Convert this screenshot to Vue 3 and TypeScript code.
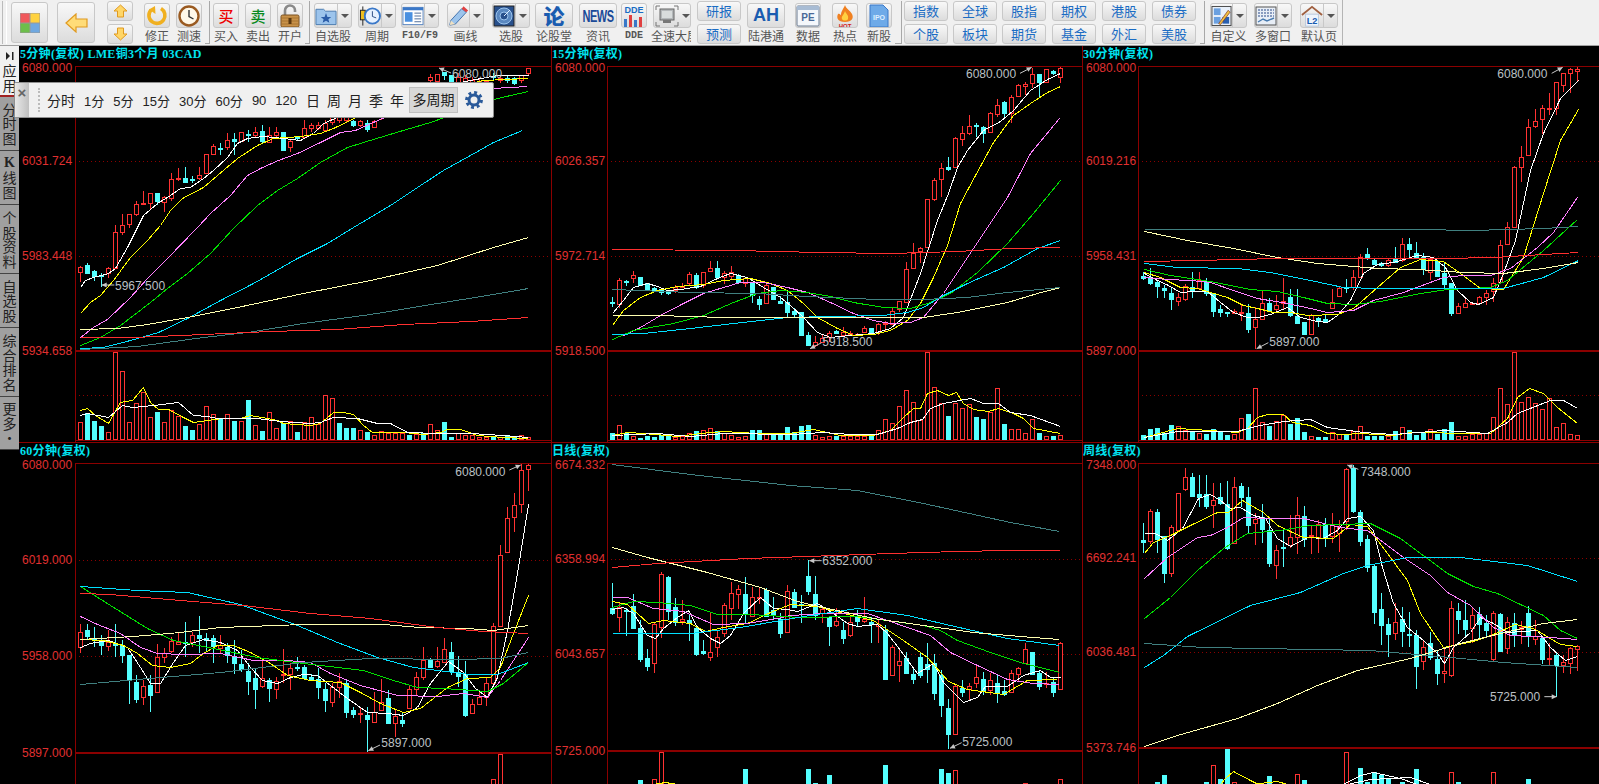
<script setup lang="ts">
type Tool = { kind: string; gap: number; w: number; label?: string; icon?: string; split?: boolean; top?: string; bottom?: string }

const tools: Tool[] = [
  { kind: 'grip', gap: 0, w: 3 },
  { kind: 'big', gap: 4, w: 37, icon: 'grid' },
  { kind: 'big', gap: 9, w: 38, icon: 'left' },
  { kind: 'pair', gap: 12, w: 26, top: '▲', bottom: '▼' },
  { kind: 'icon', gap: 11, w: 26, label: '修正', icon: 'fix' },
  { kind: 'icon', gap: 6, w: 26, label: '测速', icon: 'clock' },
  { kind: 'sep', gap: 3, w: 5 },
  { kind: 'icon', gap: 3, w: 26, label: '买入', icon: 'buy' },
  { kind: 'icon', gap: 6, w: 26, label: '卖出', icon: 'sell' },
  { kind: 'icon', gap: 6, w: 26, label: '开户', icon: 'lock' },
  { kind: 'sep', gap: 2, w: 5 },
  { kind: 'icon', gap: 4, w: 38, label: '自选股', icon: 'folder', split: true },
  { kind: 'icon', gap: 6, w: 38, label: '周期', icon: 'period', split: true },
  { kind: 'icon', gap: 5, w: 38, label: 'F10/F9', icon: 'f10', split: true },
  { kind: 'icon', gap: 8, w: 37, label: '画线', icon: 'pen', split: true },
  { kind: 'icon', gap: 8, w: 38, label: '选股', icon: 'radar', split: true },
  { kind: 'icon', gap: 5, w: 38, label: '论股堂', icon: 'lun' },
  { kind: 'icon', gap: 6, w: 38, label: '资讯', icon: 'news' },
  { kind: 'icon', gap: 4, w: 26, label: 'DDE', icon: 'dde' },
  { kind: 'icon', gap: 6, w: 38, label: '全速大屏', icon: 'screen' },
  { kind: 'pair', gap: 6, w: 44, top: '研报', bottom: '预测' },
  { kind: 'icon', gap: 6, w: 38, label: '陆港通', icon: 'ah' },
  { kind: 'icon', gap: 10, w: 26, label: '数据', icon: 'pe' },
  { kind: 'icon', gap: 11, w: 26, label: '热点', icon: 'hot' },
  { kind: 'icon', gap: 8, w: 26, label: '新股', icon: 'ipo' },
  { kind: 'sep', gap: 3, w: 7 },
  { kind: 'pair', gap: 2, w: 44, top: '指数', bottom: '个股' },
  { kind: 'pair', gap: 5, w: 44, top: '全球', bottom: '板块' },
  { kind: 'pair', gap: 5, w: 44, top: '股指', bottom: '期货' },
  { kind: 'pair', gap: 6, w: 44, top: '期权', bottom: '基金' },
  { kind: 'pair', gap: 6, w: 44, top: '港股', bottom: '外汇' },
  { kind: 'pair', gap: 6, w: 44, top: '债券', bottom: '美股' },
  { kind: 'sep', gap: 4, w: 5 },
  { kind: 'icon', gap: 5, w: 37, label: '自定义', icon: 'custom', split: true },
  { kind: 'icon', gap: 7, w: 38, label: '多窗口', icon: 'multi', split: true },
  { kind: 'icon', gap: 8, w: 38, label: '默认页', icon: 'home', split: true },
]

const sideItems = [
  { text: '应用', h: 51, on: true },
  { text: '分时图', h: 54 },
  { text: 'K线图', h: 54 },
  { text: '个股资料', h: 69 },
  { text: '自选股', h: 54 },
  { text: '综合排名', h: 69 },
  { text: '更多·', h: 53 },
]

const periods = ['分时', '1分', '5分', '15分', '30分', '60分', '90', '120']
const bigPeriods = ['日', '周', '月', '季', '年']

const MA = ['#ffffff', '#ffff00', '#ff80ff', '#00e000', '#00e0ff', '#ffffb0', '#408080', '#ff3030']

type Note = { text: string; tx: number; ty: number; l: number[] }

type Def = {
  title: string
  left: number
  w: number
  row: number
  ox: number
  oy: number
  first: number
  plot: number
  top: number
  mid: number
  dots: number[]
  labels: string[]
  labelX: number
  candles: string
  lines: string[]
  vol?: number[]
  volAt?: number[][]
  vma: string[]
  notes: Note[]
}

const defs: Def[] = [
  {
    title: '5分钟(复权) LME铜3个月 03CAD', left: 19, w: 532, row: 0, ox: 70, oy: 130, first: 31, plot: 75, top: 66, mid: 350,
    dots: [161, 256, 395], labels: ['6080.000', '6031.724', '5983.448', '5934.658'], labelX: 22,
    candles: `r408,410,425,457 c400,405,428,430 c420,424,438,453 c428,436,438,470 r412,415,430,443 r285,305,413,415 r253,286,305,315 r253,253,281,295 r213,222,252,258 r183,218,222,224 r190,190,218,240 c188,190,213,225 r198,200,216,246 r128,148,203,213 r113,143,146,153 c110,144,155,160 c138,148,150,160 r112,136,143,150 r72,72,128,130 r42,48,72,75 c40,55,57,75 r10,30,50,60 c8,28,32,75 r5,5,32,35 c0,12,14,35 r-10,5,14,20 c-15,3,32,42 r-10,15,35,38 r-10,5,16,22 c5,7,60,60 r30,33,52,65 c17,22,24,30 r-30,-5,20,25 r-20,-15,-5,5 r-25,-15,-5,0 r-30,-20,0,5 r-50,-40,-25,-15 r-60,-50,-30,-20 r-60,-45,-30,-25 c-30,-27,-15,-10 r-30,-27,-15,-10 c-30,-21,-3,5 r-30,-27,-9,-5 r-70,-60,-40,-30 r-90,-80,-60,-50 c-100,-90,-70,-60 r-110,-100,-80,-70 r-120,-110,-95,-85 c-120,-115,-100,-90 r-130,-120,-105,-95 r-168,-160,-150,-135 r-168,-168,-147,-140 c-175,-174,-165,-150 c-165,-165,-144,-135 r-170,-160,-145,-135 r-165,-155,-140,-130 r-160,-150,-140,-130 r-155,-147,-138,-128 r-150,-147,-138,-128 c-172,-162,-158,-150 r-165,-155,-150,-140 c-165,-155,-150,-140 c-160,-156,-141,-135 r-165,-165,-150,-140 r-186,-186,-171,-165`,
    lines: [
      '31,472 45,450 70,440 115,430 136,415 170,350 200,290 220,255 262,220 300,195 330,175 360,170 400,145 430,120 470,80 500,40 530,25 580,18 640,25 690,30 730,10 760,-20 850,-60 1000,-110 1200,-150 1280,-165 1374,-165',
      '31,550 60,515 90,495 130,450 180,380 230,330 270,285 300,240 335,205 400,170 440,135 500,85 560,45 610,25 690,18 750,10 790,-5 900,-60 1100,-120 1240,-150 1374,-156',
      '31,622 70,590 110,568 180,500 230,445 290,385 380,290 420,250 480,195 530,135 570,115 625,90 680,70 750,35 810,5 855,0 1071,-96 1266,-126 1371,-132',
      '31,645 90,620 150,585 240,515 290,475 350,430 420,370 490,295 560,225 620,180 680,145 750,95 830,50 880,35 978,6 1080,-24 1281,-96 1374,-117',
      '31,655 100,650 180,630 265,605 350,565 450,510 550,460 680,385 770,340 850,290 960,225 1050,165 1120,120 1200,75 1270,35 1355,0',
      '31,597 140,593 230,582 350,562 500,530 700,490 900,450 1100,405 1270,350 1374,320',
      '31,658 200,648 400,622 530,605 700,578 900,552 1100,518 1250,495 1374,475',
      '31,622 190,620 400,612 600,603 800,597 1000,582 1200,572 1374,560',
    ],
    vol: [875, -850, -873, -888, 905, 667, 722, 875, 820, 787, 862, -847, 875, 840, 857, -888, -900, 883, 829, 853, -868, 853, -873, 873, -810, 886, -903, 847, 895, -880, 873, -906, 875, 862, 882, 796, 805, -880, -895, -895, 900, -905, 915, 902, 908, 908, 908, -915, 912, -910, 883, 900, -877, -920, 908, 915, 915, 922, 922, -920, 922, -915, -922, 915, 922],
    vma: [
      '31,840 50,835 75,855 115,878 150,815 185,810 220,772 240,815 265,838 295,838 340,860 370,875 410,870 460,865 510,865 540,855 590,865 620,870 640,880 720,885 750,880 790,845 820,845 850,853 880,885 905,905 1000,905 1060,912 1110,905 1130,898 1170,898 1220,915 1300,920 1374,925',
      '31,855 50,850 115,860 155,825 185,830 250,825 325,815 370,855 410,857 440,865 560,865 630,872 720,878 750,875 790,862 860,865 920,878 960,880 1010,905 1100,908 1200,908 1300,915 1374,922',
    ],
    notes: [
      { text: '5967.500', tx: 135, ty: 467, l: [95, 465, 133, 465] },
      { text: '6080.000', tx: 1146, ty: -168, l: [1107, -186, 1143, -171] },
    ],
  },
  {
    title: '15分钟(复权)', left: 552, w: 530, row: 0, ox: 590, oy: 60, first: 67, plot: 607, top: 66, mid: 350,
    dots: [161, 256, 395], labels: ['6080.000', '6026.357', '5972.714', '5918.500'], labelX: 555,
    candles: `c712,725,727,740 r655,660,732,745 c660,663,665,678 r633,645,655,668 c650,652,676,678 c668,670,686,688 c682,685,690,696 c685,688,695,705 c690,695,698,705 r675,682,690,700 r668,678,680,685 r635,642,668,675 c640,645,680,688 r636,636,675,685 r603,625,632,636 c603,625,650,652 r633,640,650,672 r618,635,648,660 c643,645,665,668 r652,655,668,680 c665,668,705,728 c708,716,733,750 r668,676,730,732 c680,682,716,718 c708,722,728,730 c695,725,755,775 c745,752,762,770 c755,757,825,825 c815,825,855,858 r828,845,855,860 r825,835,845,848 r812,818,832,845 c810,814,820,822 r800,817,825,830 r812,818,822,825 r818,822,825,828 r798,803,815,820 c803,805,822,825 r790,793,815,825 r782,790,793,815 r745,752,792,795 r722,724,748,755 r607,628,725,728 r550,578,625,628 r562,564,572,610 r418,418,560,562 r355,360,418,422 r308,325,358,412 c292,322,328,333 r230,235,320,322 r198,220,238,258 r165,198,218,225 c190,195,198,232 c198,200,218,248 r155,160,215,218 r118,135,163,170 c123,127,160,170 r105,112,158,188 r72,74,107,110 r65,72,78,105 r25,42,68,85 c42,42,65,115 r28,28,65,68 c30,34,38,45 r22,25,50,70`,
    lines: [
      '67,760 100,720 130,680 170,668 200,678 230,690 270,688 330,678 380,655 420,640 470,650 520,680 570,712 600,735 640,770 680,815 720,832 780,825 850,818 900,805 940,770 990,640 1040,480 1075,400 1100,320 1130,270 1180,210 1230,182 1270,150 1320,90 1370,58 1411,40',
      '67,795 100,750 150,710 200,690 260,678 340,672 400,660 480,655 540,668 590,690 640,730 680,770 740,805 790,825 850,822 900,810 950,780 990,730 1030,650 1070,555 1110,430 1155,345 1210,245 1270,165 1320,130 1370,95 1411,78',
      '100,825 150,800 210,765 280,730 340,700 400,680 450,665 520,665 590,682 650,695 720,725 790,760 850,780 900,788 960,785 1000,770 1060,700 1120,610 1180,520 1250,410 1320,280 1408,175',
      '67,838 130,810 250,790 340,765 430,725 500,700 570,690 650,695 720,708 790,725 880,742 960,745 1010,730 1080,700 1160,635 1250,550 1330,460 1410,360',
      '67,823 160,820 300,803 430,790 590,772 720,768 880,765 950,755 1000,740 1060,705 1130,670 1240,620 1340,565 1410,540',
      '67,766 200,766 400,770 560,770 700,770 880,772 1000,772 1100,755 1250,725 1340,700 1410,680',
      '67,688 300,697 500,700 650,708 860,718 1000,718 1130,710 1250,695 1410,682',
      '67,568 430,570 690,575 900,578 1100,574 1260,565 1410,560',
    ],
    vol: [-1120, 1095, -1118, 1127, -1135, -1128, -1130, -1125, -1128, 1130, 1128, 1120, -1113, 1110, 1105, -1112, 1120, 1125, 1130, 1128, -1110, -1110, 1120, -1125, -1120, -1102, -1115, -1098, -1095, 1125, 1132, 1128, -1128, 1128, 1128, 1128, 1128, -1125, 1110, 1078, 1090, 1038, 990, 1026, 1080, 877, 982, 1028, -1068, 1030, 1045, 1032, -1072, -1078, 1055, 985, -1092, 1108, 1108, 1120, 1078, -1120, 1128, -1128, 1126],
    vma: [
      '67,1125 110,1115 160,1120 260,1128 330,1118 400,1112 500,1120 600,1118 670,1108 750,1125 850,1125 900,1110 940,1070 970,1045 990,1045 1010,1000 1040,990 1075,1005 1097,997 1120,1030 1150,1048 1195,1052 1225,1045 1270,1060 1300,1075 1330,1105 1411,1118',
      '67,1125 200,1118 300,1128 400,1118 600,1122 700,1115 780,1122 860,1122 920,1105 960,1085 995,1078 1020,1045 1060,1028 1140,1015 1180,1028 1225,1030 1260,1055 1320,1065 1411,1098',
    ],
    notes: [
      { text: '6080.000', tx: 1128, ty: 43, l: [1325, 22, 1290, 40] },
      { text: '5918.500', tx: 697, ty: 845, l: [660, 866, 695, 848] },
    ],
  },
  {
    title: '30分钟(复权)', left: 1083, w: 516, row: 0, ox: 1110, oy: 60, first: 101, plot: 1138, top: 66, mid: 350,
    dots: [161, 256, 395], labels: ['6080.000', '6019.216', '5958.431', '5897.000'], labelX: 1086,
    candles: `c635,648,655,660 c625,655,668,675 c662,665,677,713 c675,685,689,713 c682,700,716,750 r700,712,722,738 r672,678,716,722 c635,680,692,713 r635,660,684,688 c655,665,698,708 c698,700,752,770 c735,748,755,770 c755,757,760,772 r748,753,759,762 r735,755,757,782 c732,760,806,820 r740,778,800,868 r693,730,778,780 c715,730,750,755 r705,735,747,755 r655,722,730,750 c688,712,765,770 c687,768,788,790 c785,787,823,823 r762,765,823,825 c770,775,780,800 c762,777,783,785 r688,725,743,745 r678,685,707,710 c658,680,682,700 r630,650,680,690 r582,590,650,655 c563,583,595,600 c598,600,612,615 c605,608,616,622 r595,600,615,622 c562,595,605,608 r533,553,600,605 c535,552,567,590 c545,578,590,592 c580,590,628,645 r590,598,635,660 c600,602,648,650 c605,640,672,685 c670,670,760,768 r730,738,758,762 r718,730,742,745 r728,730,732,735 r708,710,730,735 r690,700,710,735 r655,668,692,725 r540,556,665,668 r487,500,552,555 r318,322,500,503 r258,290,320,365 r178,200,284,287 r147,182,197,205 r135,145,176,222 r100,144,146,165 r65,67,143,165 r40,40,74,95 r25,26,38,100 r22,26,32,62`,
    lines: [
      '101,640 140,660 175,675 210,695 250,693 290,692 330,725 370,755 410,770 440,772 480,762 530,740 570,770 620,783 650,785 680,765 720,720 760,640 800,612 850,605 920,585 970,590 1005,620 1040,690 1080,725 1105,732 1150,710 1180,640 1215,540 1260,330 1300,220 1350,115 1403,60',
      '101,635 150,650 210,680 260,685 300,695 350,712 400,735 440,745 490,755 540,755 590,765 680,762 730,745 800,680 870,620 930,597 1000,603 1050,640 1110,685 1180,688 1240,590 1300,400 1350,240 1403,148',
      '101,650 170,658 240,660 300,665 370,690 440,715 530,730 600,745 650,755 730,750 790,720 880,695 1000,650 1060,645 1140,645 1200,625 1280,560 1330,515 1400,412',
      '101,628 180,645 300,662 420,688 500,692 580,710 650,728 730,733 810,722 930,700 1010,687 1140,680 1190,660 1300,570 1400,478',
      '101,610 200,620 380,625 480,635 600,660 700,680 800,685 1000,683 1180,685 1300,650 1403,600',
      '101,513 230,540 370,565 500,590 620,610 800,623 920,628 1060,635 1180,640 1300,625 1403,607',
      '101,506 930,506 1080,511 1300,505 1403,497',
      '101,604 260,600 500,595 800,594 1000,595 1150,590 1300,583 1403,577',
    ],
    vol: [-1125, -1108, -1105, -1118, -1095, 1097, 1110, -1115, 1120, -1122, -1108, -1115, -1125, 1122, 1075, -1062, 985, 1087, -1098, 1082, 1065, -1092, -1075, -1115, 1128, -1132, -1130, 1115, 1122, -1125, 1112, 1097, -1128, -1128, -1128, 1128, -1113, 1102, -1110, -1125, -1115, 1108, -1122, -1108, -1087, 1127, 1127, 1123, 1122, 1120, 1070, 985, 1033, 877, 1027, 1012, 1030, 1048, 1015, 1100, 1090, 1123, 1126],
    vma: [
      '101,1130 200,1105 300,1110 380,1115 410,1105 440,1070 470,1063 520,1063 545,1085 600,1095 650,1120 700,1122 750,1118 850,1125 900,1115 1100,1118 1140,1118 1190,1075 1220,1010 1256,985 1300,998 1340,1040 1400,1088',
      '101,1130 200,1112 380,1112 410,1105 450,1095 520,1082 600,1078 650,1100 760,1115 850,1122 1000,1110 1130,1118 1190,1085 1220,1060 1320,1020 1360,1020 1400,1045',
    ],
    notes: [
      { text: '6080.000', tx: 1162, ty: 43, l: [1358, 22, 1325, 40] },
      { text: '5897.000', tx: 478, ty: 845, l: [440, 866, 475, 848] },
    ],
  },
  {
    title: '60分钟(复权)', left: 19, w: 532, row: 1, ox: 70, oy: 450, first: 31, plot: 75, top: 463, mid: 752,
    dots: [560, 656], labels: ['6080.000', '6019.000', '5958.000', '5897.000'], labelX: 22,
    candles: `r522,547,590,608 c522,540,558,570 c530,563,570,590 c555,575,585,615 r540,575,587,603 c522,578,586,620 c570,585,615,640 c615,615,690,762 c675,696,746,760 r690,708,740,765 c675,705,735,785 r582,622,727,730 r595,610,620,640 r560,573,602,608 r548,576,583,585 c517,575,578,620 r545,555,577,590 c498,555,565,610 c548,565,570,605 c555,565,587,640 r555,585,593,610 c580,590,615,640 c570,622,640,672 c600,642,657,665 c640,662,692,735 c655,684,716,776 r630,683,708,714 c685,690,713,755 r682,692,718,746 r597,672,674,700 r640,655,672,720 c620,650,652,662 c645,652,685,690 c672,680,688,693 c655,688,710,746 c700,717,750,785 r700,710,755,772 r670,692,710,745 c690,698,785,805 c770,780,792,803 r775,790,792,818 c770,795,808,905 r725,785,815,815 r687,755,780,782 c720,745,820,822 r780,798,818,860 c790,810,818,832 r705,718,775,778 r665,680,718,735 r590,630,680,690 c625,628,652,655 r590,633,648,655 r565,598,635,640 c575,606,662,675 c618,665,677,710 c632,672,795,800 r748,763,790,792 r725,742,763,765 r685,700,742,768 r518,528,698,700 r285,316,527,530 r170,205,307,310 r130,165,200,245 r42,60,163,190 r42,46,58,123`,
    lines: [
      '31,590 60,578 115,570 170,590 210,650 240,698 270,698 310,635 345,585 400,568 450,575 500,600 540,650 575,690 620,700 660,680 700,672 740,675 780,705 830,745 890,785 950,790 1000,795 1040,770 1080,700 1135,632 1180,665 1215,715 1250,740 1280,680 1310,540 1340,370 1375,162',
      '31,567 100,570 160,585 200,610 245,645 300,650 360,640 400,610 440,585 490,585 540,605 600,640 650,675 720,690 810,695 870,725 930,760 1000,785 1050,775 1130,710 1190,685 1260,680 1290,650 1330,550 1375,435',
      '31,497 80,522 150,550 210,590 260,610 340,612 450,610 550,630 650,630 720,635 780,670 870,705 980,735 1100,738 1180,730 1250,740 1290,690 1330,630 1373,562',
      '31,407 120,465 230,535 310,570 430,595 560,620 700,640 880,660 970,690 1040,712 1120,715 1250,722 1300,700 1373,635',
      '31,408 200,420 350,425 510,463 680,525 800,575 920,620 1030,652 1200,672 1280,672 1373,635',
      '31,568 190,558 330,545 450,530 700,523 940,523 1050,532 1190,535 1270,540 1373,525',
      '31,703 200,688 450,665 700,635 900,625 1150,628 1290,625 1373,607',
      '31,430 120,432 330,450 520,465 720,490 900,505 1100,530 1240,542 1373,550',
    ],
    volAt: [[1270, 988], [1291, 912]],
    vma: [],
    notes: [
      { text: '6080.000', tx: 1156, ty: 65, l: [1352, 45, 1318, 60] },
      { text: '5897.000', tx: 934, ty: 880, l: [895, 902, 930, 885] },
    ],
  },
  {
    title: '日线(复权)', left: 552, w: 530, row: 1, ox: 590, oy: 450, first: 67, plot: 607, top: 463, mid: 750,
    dots: [559, 654], labels: ['6674.332', '6358.994', '6043.657', '5725.000'], labelX: 555,
    candles: `c400,475,490,495 r460,472,500,545 c475,480,482,558 c433,468,533,535 c510,533,627,635 c598,625,648,662 r520,523,640,670 r365,372,530,565 c378,382,482,510 c445,472,515,527 r450,507,512,525 c495,510,520,572 c530,535,612,618 c570,603,609,615 r490,607,620,632 r540,560,590,622 r458,466,548,560 r397,430,475,510 r405,418,433,478 c382,432,490,520 r410,440,498,502 r412,440,442,462 c415,420,497,500 c442,480,492,508 c490,507,548,563 r405,422,545,547 c418,427,470,472 c435,462,466,520 c330,378,423,435 c378,433,495,510 r472,478,488,518 c498,500,527,588 r475,514,524,530 c515,540,563,582 r500,517,555,560 c480,500,512,530 r440,508,513,520 c500,517,523,578 r510,523,527,578 c525,540,687,690 r585,592,674,677 r600,634,644,695 c605,625,670,672 c655,672,687,702 c605,622,675,685 c578,642,657,700 c612,640,728,750 c660,676,764,800 c748,775,852,897 r705,707,853,855 c690,713,726,740 r700,707,718,750 r645,682,700,715 c665,688,723,735 r668,690,720,735 c675,698,730,758 c690,724,733,738 r660,670,727,730 r650,655,673,695 r580,598,638,642 c605,607,672,675 c660,670,707,720 r665,700,702,715 c680,697,725,740 r575,578,717,720`,
    lines: [
      '67,478 100,470 130,490 170,555 195,565 220,535 260,500 295,480 320,530 360,565 390,580 420,555 460,490 510,440 550,475 590,478 620,484 680,458 730,490 770,520 800,527 860,522 890,550 930,600 980,670 1030,640 1060,695 1120,757 1160,740 1185,708 1250,708 1300,675 1350,660 1380,680 1411,680',
      '67,452 110,462 175,518 220,510 300,520 345,543 400,530 470,520 540,485 600,462 680,468 760,490 850,510 940,570 1010,620 1075,693 1130,718 1240,733 1310,690 1400,688',
      '67,442 110,442 190,475 280,482 370,523 470,520 560,505 600,495 700,490 830,490 950,530 1020,555 1080,605 1160,645 1250,688 1330,700 1408,703',
      '67,470 130,452 200,455 300,465 380,493 480,493 630,502 800,497 1000,525 1050,540 1100,570 1200,605 1290,635 1408,667',
      '67,550 300,550 450,530 640,498 800,475 950,495 1080,525 1250,565 1408,586',
      '67,292 170,322 350,365 510,410 620,452 700,470 850,505 1000,525 1150,545 1290,558 1408,568',
      '67,42 300,72 600,105 800,120 1000,160 1260,215 1408,242',
      '67,350 200,338 470,325 650,318 900,310 1100,304 1250,301 1408,301',
    ],
    volAt: [[151, -990], [193, 988], [214, 907], [466, -957], [655, -957], [676, -998], [718, -975], [886, -945], [1054, -957], [1075, -968], [1096, 961], [1306, 998], [1411, 988]],
    vma: ['190,1002 225,995 260,1002'],
    notes: [
      { text: '6352.000', tx: 697, ty: 332, l: [658, 332, 695, 332] },
      { text: '5725.000', tx: 1117, ty: 875, l: [1080, 895, 1115, 878] },
    ],
  },
  {
    title: '周线(复权)', left: 1083, w: 516, row: 1, ox: 1110, oy: 450, first: 101, plot: 1138, top: 463, mid: 747,
    dots: [558, 652], labels: ['7348.000', '6692.241', '6036.481', '5373.746'], labelX: 1086,
    candles: `c220,270,276,310 r178,182,272,282 c178,186,268,308 c258,258,368,398 r225,232,370,380 r130,130,240,242 r55,82,118,122 c68,82,138,142 c75,132,142,172 c75,133,167,177 r100,150,166,235 c100,140,160,165 c93,162,295,300 r82,112,280,282 c100,108,140,170 c112,140,225,250 r190,208,218,285 c162,200,237,280 c200,240,338,350 r285,300,344,388 c240,290,293,352 r195,262,285,295 r142,196,260,312 c168,198,268,290 r225,255,258,312 r210,222,260,308 c205,222,265,290 r190,225,258,280 r210,230,250,305 r55,58,212,240 c45,55,183,188 c180,186,272,287 c255,268,350,365 c345,348,485,522 c430,478,525,585 c505,522,552,622 r460,515,550,570 c472,508,542,590 c487,552,554,590 c540,555,648,716 r570,590,632,660 c545,578,622,630 c600,628,668,705 r590,662,668,700 r453,475,676,680 c458,484,507,552 c450,510,538,560 r475,495,534,578 c472,492,522,568 c495,520,540,562 r483,490,628,632 c490,492,602,604 r500,515,595,612 c490,520,552,590 r512,532,536,582 c468,490,558,590 r510,558,566,585 c558,563,628,642 r580,625,628,645 c605,616,645,740 r615,637,645,668 r590,595,640,672 r585,588,596,662`,
    lines: [
      '101,248 135,248 170,270 215,235 240,190 265,145 300,133 330,150 360,175 390,170 430,195 465,205 500,265 540,288 590,262 640,265 680,240 710,205 750,198 790,240 815,350 850,460 890,530 940,570 980,610 1003,640 1030,590 1080,545 1110,500 1150,520 1190,545 1280,540 1320,590 1365,630 1400,618',
      '101,310 130,275 180,255 240,225 320,185 355,185 395,150 460,185 500,225 580,260 670,265 720,222 770,228 830,310 890,390 930,490 1000,590 1090,572 1150,552 1215,522 1270,535 1350,582 1400,588',
      '101,385 170,320 260,260 300,255 350,230 400,202 480,205 580,205 690,230 770,240 880,320 960,375 1010,425 1080,465 1150,530 1200,555 1320,560 1400,567',
      '101,505 180,440 260,360 340,295 410,250 510,240 600,225 780,218 870,265 1010,368 1090,408 1160,430 1300,495 1350,540 1400,565',
      '101,652 160,615 230,558 420,465 570,425 700,370 770,345 890,322 1050,320 1250,345 1400,392',
      '101,888 200,855 380,805 500,760 620,705 740,660 900,625 1050,580 1170,550 1300,520 1400,508',
      '101,580 280,592 780,600 1020,622 1180,637 1400,650',
    ],
    volAt: [[143, -996], [164, -975], [290, -996], [311, 945], [332, -987], [353, -897], [374, 995], [479, -978], [563, 972], [584, -990], [710, 907], [752, -955], [773, -995], [794, -967], [815, -975], [836, -985], [878, -996], [920, -957], [1025, 965], [1046, -995], [1151, 965], [1256, -988]],
    vma: ['330,1002 345,985 370,963 420,990 445,1002', '700,1002 750,975 790,967 870,985 920,1002 990,1002', '340,1002 420,1002 500,992 530,1002', '710,1002 780,987 900,982 960,1002'],
    notes: [
      { text: '7348.000', tx: 752, ty: 65, l: [712, 45, 745, 58] },
      { text: '5725.000', tx: 1140, ty: 740, l: [1340, 740, 1303, 740] },
    ],
  },
]

const px = (v: number) => Math.round(v) + 0.5

const buildChart = (d: Def) => {
  const fx = (z: number) => d.ox + z / 3
  const fy = (z: number) => d.oy + z / 3
  const mapLine = (s: string) =>
    s.split(' ').map(p => {
      const [x, y] = p.split(',').map(Number)
      return `${px(fx(x))},${px(fy(y))}`
    }).join(' ')

  let redWick = '', cyanWick = '', redBody = '', cyanBody = ''
  d.candles.trim().split(/\s+/).forEach((t, i) => {
    const [hi, top, bot, lo] = t.slice(1).split(',').map(Number)
    const x = px(fx(d.first + 21 * i) - 0.5)
    const wick = `M${x} ${Math.round(fy(hi))}V${Math.round(fy(lo))}`
    const yt = px(fy(top))
    const yb = Math.max(px(fy(bot)), yt + 1)
    const body = `M${x - 2} ${yt}H${x + 2}V${yb}H${x - 2}Z`
    if (t[0] === 'r') { redWick += wick; redBody += body } else { cyanWick += wick; cyanBody += body }
  })

  const volBottom = d.row === 0 ? 439 : 790
  let volRed = '', volCyan = ''
  const volList = d.vol ? d.vol.map((v, i) => [d.first + 21 * i, v]) : d.volAt || []
  volList.forEach(([zx, v]) => {
    const x = px(fx(zx) - 0.5)
    const y = px(fy(Math.abs(v)))
    const body = `M${x - 2} ${y}H${x + 2}V${volBottom}H${x - 2}Z`
    if (v > 0) volRed += body
    else volCyan += body
  })

  const vb = d.row === 0 ? { y: 60, h: 382 } : { y: 457, h: 327 }
  return {
    ...d,
    viewBox: `${d.left} ${vb.y} ${d.w} ${vb.h}`,
    width: d.w,
    height: vb.h,
    right: d.left + d.w,
    bottom: vb.y + vb.h,
    // the top and bottom prices sit just below their frame lines
    labelYs: [d.top + 2, d.dots[0], d.dots[1], d.mid + 1],
    redWick, cyanWick, redBody, cyanBody, volRed, volCyan,
    maLines: d.lines.map((s, i) => ({ color: MA[i], pts: mapLine(s) })),
    volLines: d.vma.map((s, i) => ({ color: i % 2 === 0 ? '#ffff00' : '#ffffff', pts: mapLine(s) })),
    noteItems: d.notes.map(n => {
      const x1 = fx(n.l[0]), y1 = fy(n.l[1]), x2 = fx(n.l[2]), y2 = fy(n.l[3])
      const len = Math.hypot(x2 - x1, y2 - y1)
      const ux = (x2 - x1) / len, uy = (y2 - y1) / len
      const head = [
        [x1, y1],
        [x1 + ux * 5 - uy * 2.5, y1 + uy * 5 + ux * 2.5],
        [x1 + ux * 5 + uy * 2.5, y1 + uy * 5 - ux * 2.5],
      ].map(p => p.join(',')).join(' ')
      return { text: n.text, x: fx(n.tx), y: fy(n.ty) + 4, x1, y1, x2, y2, head }
    }),
  }
}

const charts = defs.map(buildChart)
</script>

<template>
  <div class="app">
    <header class="toolbar">
      <div class="tools">
        <template v-for="(t, i) in tools" :key="i">
          <div v-if="t.kind === 'grip'" class="grip" :style="{ marginLeft: t.gap + 'px', width: t.w + 'px' }"></div>
          <div v-else-if="t.kind === 'sep'" class="sep" :style="{ marginLeft: t.gap + 'px', width: t.w + 'px' }"></div>
          <div v-else-if="t.kind === 'pair'" class="pair" :style="{ marginLeft: t.gap + 'px', width: t.w + 'px' }">
            <template v-if="t.top === '▲'">
              <button class="btn small">
                <svg width="15" height="14" viewBox="0 0 15 14"><path d="M7.5 1L14 7H10.5V13H4.5V7H1Z" fill="#ffd667" stroke="#e09a20" /></svg>
              </button>
              <button class="btn small">
                <svg width="15" height="14" viewBox="0 0 15 14"><path d="M7.5 13L14 7H10.5V1H4.5V7H1Z" fill="#ffd667" stroke="#e09a20" /></svg>
              </button>
            </template>
            <template v-else>
              <button class="btn small blue">{{ t.top }}</button>
              <button class="btn small blue">{{ t.bottom }}</button>
            </template>
          </div>
          <button v-else-if="t.kind === 'big'" class="btn big" :style="{ marginLeft: t.gap + 'px', width: t.w + 'px' }">
            <svg v-if="t.icon === 'grid'" width="22" height="22" viewBox="0 0 22 22">
              <rect x="1" y="1" width="20" height="20" fill="#999" />
              <rect x="1.5" y="1.5" width="9" height="9" fill="#f0595c" />
              <rect x="11.5" y="1.5" width="9" height="9" fill="#ffd23f" />
              <rect x="1.5" y="11.5" width="9" height="9" fill="#6dbe4b" />
              <rect x="11.5" y="11.5" width="9" height="9" fill="#6fa8e0" />
            </svg>
            <svg v-else width="23" height="20" viewBox="0 0 23 20">
              <path d="M1 10L11 1V6H22V14H11V19Z" fill="#ffdc78" stroke="#e09a20" stroke-width="1.2" />
            </svg>
          </button>
          <div v-else class="tool" :style="{ marginLeft: t.gap + 'px', width: t.w + 'px' }">
            <div class="btn face">
              <div class="face-main">
                <span v-if="t.icon === 'buy'" class="glyph red">买</span>
                <span v-else-if="t.icon === 'sell'" class="glyph green">卖</span>
                <span v-else-if="t.icon === 'lun'" class="glyph lun">论</span>
                <span v-else-if="t.icon === 'news'" class="news">NEWS</span>
                <span v-else-if="t.icon === 'ah'" class="ah">AH</span>
                <svg v-else-if="t.icon === 'fix'" width="22" height="22" viewBox="0 0 22 22">
                  <path d="M15 3.5A8 8 0 1 1 5 5" fill="none" stroke="#f0b020" stroke-width="3.6" />
                  <path d="M9 1L9.5 9L3 4.5Z" fill="#f0b020" />
                </svg>
                <svg v-else-if="t.icon === 'clock'" width="22" height="22" viewBox="0 0 22 22">
                  <circle cx="11" cy="11" r="9.5" fill="#fff8e8" stroke="#9a5a20" stroke-width="2.4" />
                  <path d="M11 5V11.5L15.5 14" fill="none" stroke="#333" stroke-width="1.4" />
                </svg>
                <svg v-else-if="t.icon === 'lock'" width="22" height="24" viewBox="0 0 22 24">
                  <path d="M6 11V6.5A5 5 0 0 1 16 6.5V8" fill="none" stroke="#8a8a8a" stroke-width="2.6" />
                  <rect x="2" y="11" width="18" height="12" rx="1.5" fill="#c8924a" stroke="#7a5020" />
                  <path d="M3 14H19M3 17H19M3 20H19" stroke="#a87430" />
                  <rect x="9.5" y="14" width="3" height="6" fill="#5a3810" />
                </svg>
                <svg v-else-if="t.icon === 'folder'" width="23" height="21" viewBox="0 0 23 21">
                  <path d="M1 4H9L11 6H22V20H1Z" fill="#9cc4ec" stroke="#4a7cb0" />
                  <path d="M11.5 8L13 12H17L14 14.5L15 18L11.5 16L8 18L9 14.5L6 12H10Z" fill="#2a5ca8" />
                </svg>
                <svg v-else-if="t.icon === 'period'" width="23" height="22" viewBox="0 0 23 22">
                  <path d="M4 1V21" stroke="#222" />
                  <rect x="1.5" y="5" width="5" height="10" fill="#f0c020" stroke="#222" />
                  <circle cx="14" cy="11" r="8" fill="#e8f2ff" stroke="#3a78c8" stroke-width="2" />
                  <path d="M14 6V11.5L18 13" fill="none" stroke="#2a4a80" />
                </svg>
                <svg v-else-if="t.icon === 'f10'" width="23" height="20" viewBox="0 0 23 20">
                  <rect x="1" y="1" width="21" height="18" fill="#fff" stroke="#5a86c0" />
                  <rect x="1" y="1" width="21" height="3" fill="#3a78c8" />
                  <rect x="3" y="6" width="8" height="10" fill="#4a90e0" />
                  <path d="M13 7H20M13 10H20M13 13H20M13 16H20" stroke="#4a6a98" />
                </svg>
                <svg v-else-if="t.icon === 'pen'" width="23" height="23" viewBox="0 0 23 23">
                  <path d="M3 17L15 4L20 8L8 21L2 22Z" fill="#9cc4ec" stroke="#3a6ca8" />
                  <path d="M15 4L17 1.5L22 6L20 8Z" fill="#e04040" />
                  <path d="M2 22L3 17L8 21Z" fill="#f0e0c0" />
                </svg>
                <svg v-else-if="t.icon === 'radar'" width="22" height="22" viewBox="0 0 22 22">
                  <rect x="1" y="1" width="20" height="20" fill="#28508c" stroke="#222" />
                  <circle cx="11" cy="11" r="8" fill="#5a88c0" stroke="#9cc4ec" />
                  <circle cx="11" cy="11" r="4" fill="#28508c" stroke="#9cc4ec" />
                  <path d="M11 11L17 5" stroke="#dfefff" />
                </svg>
                <svg v-else-if="t.icon === 'dde'" width="24" height="24" viewBox="0 0 24 24">
                  <text x="12" y="9" text-anchor="middle" class="dde-text">DDE</text>
                  <rect x="2" y="15" width="3" height="8" fill="#3a78c8" />
                  <rect x="7" y="11" width="3" height="12" fill="#e04040" />
                  <rect x="12" y="16" width="3" height="7" fill="#3a78c8" />
                  <rect x="17" y="13" width="3" height="10" fill="#e04040" />
                </svg>
                <template v-else-if="t.icon === 'screen'">
                  <svg width="24" height="22" viewBox="0 0 24 22">
                    <path d="M1 5V1H5M19 1H23V5M1 17V21H5M19 21H23V17" fill="none" stroke="#777" />
                    <rect x="5" y="4" width="14" height="11" fill="#b4b8ba" stroke="#666" />
                    <rect x="7" y="6" width="10" height="7" fill="#d8dcdc" />
                    <rect x="8" y="15" width="8" height="3" fill="#777" />
                  </svg>
                  <i class="tri"></i>
                </template>
                <svg v-else-if="t.icon === 'pe'" width="24" height="22" viewBox="0 0 24 22">
                  <rect x="1" y="1" width="22" height="20" rx="1" fill="#f4f7fb" stroke="#6a7a90" />
                  <rect x="1" y="1" width="22" height="4" fill="#a8bcd4" />
                  <text x="12" y="16" text-anchor="middle" class="pe-text">PE</text>
                </svg>
                <svg v-else-if="t.icon === 'hot'" width="22" height="24" viewBox="0 0 22 24">
                  <path d="M11 1C12 5 16 6 18 10C20 14 18 18 11 18C4 18 2 14 4 10C6 9 6 11 7 11C7 7 9 6 11 1Z" fill="#f08020" />
                  <path d="M11 7C12 10 15 11 14 15C13 17 9 17 8 15C7 12 10 11 11 7Z" fill="#ffd040" />
                  <text x="11" y="23.5" text-anchor="middle" class="hot-text">HOT</text>
                </svg>
                <svg v-else-if="t.icon === 'ipo'" width="20" height="24" viewBox="0 0 20 24">
                  <path d="M1 1H14L19 6V23H1Z" fill="#6eaae8" stroke="#3a78c8" />
                  <text x="10" y="16" text-anchor="middle" class="ipo-text">IPO</text>
                </svg>
                <svg v-else-if="t.icon === 'custom'" width="22" height="22" viewBox="0 0 22 22">
                  <rect x="1" y="1" width="20" height="20" fill="#e8f0fa" stroke="#444" />
                  <rect x="3" y="3" width="7" height="7" fill="#6aa0e0" />
                  <rect x="3" y="12" width="7" height="7" fill="#6aa0e0" />
                  <rect x="12" y="12" width="7" height="7" fill="#2a60b0" />
                  <path d="M8 19L18 5L20 7L10 20Z" fill="#f0c040" stroke="#803020" stroke-width=".7" />
                </svg>
                <svg v-else-if="t.icon === 'multi'" width="22" height="20" viewBox="0 0 22 20">
                  <rect x="1" y="1" width="20" height="18" fill="#e8eef6" stroke="#555" />
                  <path d="M3 4H19M3 7H19M3 10H19" stroke="#2a4a88" stroke-dasharray="2 1" />
                  <path d="M3 16L8 13L12 15L19 12" fill="none" stroke="#4a7cb0" stroke-width="1.4" />
                </svg>
                <svg v-else-if="t.icon === 'home'" width="24" height="24" viewBox="0 0 24 24">
                  <path d="M1 11L12 2L23 11" fill="none" stroke="#a06040" stroke-width="2" />
                  <rect x="5" y="10" width="14" height="13" fill="#eef4fc" stroke="#b8c8dc" />
                  <text x="12" y="21" text-anchor="middle" class="l2-text">L2</text>
                </svg>
              </div>
              <div v-if="t.split" class="face-split"><i class="tri"></i></div>
            </div>
            <div
              class="tool-label"
              :class="{ mono: t.label === 'F10/F9' || t.label === 'DDE', clip: t.label === '全速大屏' }"
            >{{ t.label }}</div>
          </div>
        </template>
      </div>
    </header>

    <div class="body">
      <aside class="side">
        <div v-for="s in sideItems" :key="s.text" class="side-item" :class="{ on: s.on }" :style="{ height: s.h + 'px' }">
          <svg v-if="s.on" class="side-mark" width="9" height="8" viewBox="0 0 9 8"><path d="M1 0L5 4L1 8Z M7 0H8.5V8H7Z" fill="#222" /></svg>
          <span v-for="(c, i) in s.text" :key="i" :class="{ serif: c === 'K' }">{{ c }}</span>
        </div>
      </aside>

      <main class="charts">
        <section v-for="c in charts" :key="c.title" class="panel" :class="{ lower: c.row === 1, bordered: c.left > 19 }">
          <div class="panel-title">{{ c.title }}</div>
          <svg class="chart" :width="c.width" :height="c.height" :viewBox="c.viewBox">
            <g shape-rendering="crispEdges">
              <line v-for="y in c.dots" :key="y" :x1="c.plot" :x2="c.right" :y1="y + 0.5" :y2="y + 0.5" class="dotted" />
              <line :x1="c.plot + 0.5" :x2="c.plot + 0.5" :y1="c.top" :y2="c.bottom" class="frame" />
              <line :x1="c.plot" :x2="c.right" :y1="c.top + 0.5" :y2="c.top + 0.5" class="frame" />
              <line v-if="c.row === 0" :x1="c.plot" :x2="c.right" y1="440.5" y2="440.5" class="frame" />
              <path :d="c.volCyan" fill="#54ffff" stroke="#54ffff" />
              <path :d="c.volRed" fill="#000" stroke="#ff3232" />
              <polyline v-for="(l, i) in c.volLines" :key="i" :points="l.pts" fill="none" :stroke="l.color" />
              <line :x1="c.plot" :x2="c.right" :y1="c.mid + 1" :y2="c.mid + 1" class="frame thick" />
              <path :d="c.redWick" stroke="#ff3232" fill="none" />
              <path :d="c.cyanWick" stroke="#54ffff" fill="none" />
              <path :d="c.redBody" fill="#000" stroke="#ff3232" />
              <path :d="c.cyanBody" fill="#54ffff" stroke="#54ffff" />
              <polyline v-for="(l, i) in c.maLines" :key="i" :points="l.pts" fill="none" :stroke="l.color" />
            </g>
            <text v-for="(t, i) in c.labels" :key="t" :x="c.labelX" :y="c.labelYs[i] + 4" class="axis-label">{{ t }}</text>
            <g v-for="n in c.noteItems" :key="n.text">
              <line :x1="n.x1" :y1="n.y1" :x2="n.x2" :y2="n.y2" stroke="#c8c8c8" />
              <polygon :points="n.head" fill="#c8c8c8" />
              <text :x="n.x" :y="n.y" class="note">{{ n.text }}</text>
            </g>
          </svg>
        </section>
      </main>

      <div class="period-bar">
        <div class="period-close">×</div>
        <div class="period-grip"></div>
        <div class="period-list">
          <span v-for="p in periods" :key="p" class="period" :class="{ first: p === '分时' }">{{ p }}</span>
          <span v-for="p in bigPeriods" :key="p" class="period wide">{{ p }}</span>
          <span class="period-active">多周期</span>
          <svg class="gear" width="18" height="18" viewBox="0 0 18 18">
            <circle cx="9" cy="9" r="7.4" fill="none" stroke="#2a5a9a" stroke-width="3" stroke-dasharray="2.9 2.9" />
            <circle cx="9" cy="9" r="5" fill="none" stroke="#2a5a9a" stroke-width="3" />
          </svg>
        </div>
      </div>
    </div>
  </div>
</template>

<style>
html, body {
  margin: 0;
  background: #000;
  overflow: hidden;
}
</style>

<style scoped>
.app {
  width: 1599px;
  height: 784px;
  display: flex;
  flex-direction: column;
  overflow: hidden;
  font-family: "Noto Sans CJK SC", "Liberation Sans", sans-serif;
}

.toolbar {
  height: 46px;
  flex: none;
  box-sizing: border-box;
  background: #f0f0f0;
  border-bottom: 1px solid #a0a0a0;
}
.tools {
  display: flex;
  align-items: stretch;
  box-sizing: border-box;
  width: 1343px;
  height: 45px;
  padding-left: 2px;
  border-right: 1px solid #b4b4b4;
}

.grip {
  margin: 1px 0;
  border-left: 1px solid #bbb;
  border-right: 1px solid #fff;
}
.sep {
  box-sizing: border-box;
  margin: 1px 0;
  border-right: 1px solid #a8a8a8;
  border-bottom: 1px solid #a8a8a8;
  height: 43px;
}

.btn {
  display: flex;
  align-items: center;
  justify-content: center;
  box-sizing: border-box;
  padding: 0;
  border: 1px solid #c8c8c8;
  border-radius: 3px;
  background: linear-gradient(#f8f8f8, #dcdcdc);
  font-family: inherit;
}
.big {
  height: 41px;
  margin-top: 2px;
  flex: none;
}
.pair {
  display: flex;
  flex-direction: column;
  gap: 3px;
  padding-top: 1px;
  flex: none;
}
.small {
  height: 20px;
  width: 100%;
}
.blue {
  color: #1a6cc4;
  font-size: 13px;
  line-height: 18px;
}

.tool {
  display: flex;
  flex-direction: column;
  flex: none;
  padding-top: 3px;
}
.face {
  height: 25px;
  overflow: hidden;
}
.face-main {
  flex: 1;
  display: flex;
  align-items: center;
  justify-content: center;
  gap: 3px;
  height: 100%;
  min-width: 0;
}
.face-split {
  width: 13px;
  height: 100%;
  display: flex;
  align-items: center;
  justify-content: center;
  border-left: 1px solid #c8c8c8;
  flex: none;
}
.tri {
  display: block;
  width: 0;
  height: 0;
  border-left: 4px solid transparent;
  border-right: 4px solid transparent;
  border-top: 4px solid #555;
}
.tool-label {
  height: 16px;
  line-height: 16px;
  font-size: 12px;
  color: #555;
  white-space: nowrap;
  overflow: hidden;
  text-align: center;
  display: flex;
  justify-content: center;
}
.tool-label.mono {
  font-family: "Liberation Mono", monospace;
  font-size: 10px;
  font-weight: bold;
}
.tool-label.clip {
  justify-content: flex-start;
  margin-left: -2px;
}
.glyph {
  font-size: 15px;
  font-weight: 500;
  line-height: 1;
}
.red { color: #ee0000; }
.green { color: #0a8a20; }
.lun {
  font-size: 21px;
  color: #1a5cb0;
  font-weight: 900;
}
.news {
  font-family: "Liberation Sans", sans-serif;
  font-weight: 700;
  font-size: 11px;
  letter-spacing: -0.5px;
  color: #1a4a98;
  transform: scaleY(1.5);
}
.ah {
  font-family: "Liberation Sans", sans-serif;
  font-weight: 700;
  font-size: 18px;
  color: #1a5cb0;
}
.dde-text {
  font: 700 9px "Liberation Sans", sans-serif;
  fill: #1a6cc4;
}
.pe-text {
  font: 700 10px "Liberation Sans", sans-serif;
  fill: #4a6a98;
}
.hot-text {
  font: 700 6px "Liberation Sans", sans-serif;
  fill: #d02020;
}
.ipo-text {
  font: 700 7px "Liberation Sans", sans-serif;
  fill: #dfefff;
}
.l2-text {
  font: 700 10px "Liberation Sans", sans-serif;
  fill: #1a5cb0;
}

.body {
  position: relative;
  flex: 1;
  display: flex;
  background: #000;
  min-height: 0;
}

.side {
  width: 19px;
  flex: none;
}
.side-item {
  box-sizing: border-box;
  display: flex;
  flex-direction: column;
  align-items: center;
  justify-content: center;
  background: #a0a0a0;
  border-bottom: 1px solid #444;
  font-size: 14px;
  line-height: 14.5px;
  color: #222;
}
.side-item.on {
  background: #f0f0f0;
  border-bottom: 2px solid #a02020;
  justify-content: flex-start;
  padding-top: 6px;
}
.side-mark {
  margin-bottom: 3px;
  flex: none;
}
.serif {
  font-family: "Liberation Serif", serif;
  font-weight: 700;
}

.charts {
  flex: 1;
  display: grid;
  grid-template-columns: 532px 531px 517px;
  grid-template-rows: 396px 342px;
}
.panel {
  display: flex;
  flex-direction: column;
  min-width: 0;
  overflow: hidden;
}
.panel.bordered {
  border-left: 1px solid #8b0000;
}
.panel.lower {
  border-top: 1px solid #8b0000;
}
.panel-title {
  height: 14px;
  line-height: 16px;
  flex: none;
  padding-left: 1px;
  font-family: "Liberation Serif", "Noto Sans CJK SC", serif;
  font-size: 12px;
  font-weight: 700;
  letter-spacing: 0.3px;
  color: #00e4f0;
  white-space: nowrap;
}
.bordered .panel-title {
  padding-left: 0;
}
.chart {
  display: block;
  flex: none;
}
.frame {
  stroke: #8b0000;
}
.frame.thick {
  stroke-width: 2;
}
.dotted {
  stroke: #8b0000;
  stroke-dasharray: 1 3;
}
.axis-label {
  font: 12px "Liberation Sans", sans-serif;
  fill: #e03030;
}
.note {
  font: 12px "Liberation Sans", sans-serif;
  fill: #bcc0c4;
}

.period-bar {
  position: absolute;
  left: 14px;
  top: 36px;
  width: 480px;
  height: 36px;
  box-sizing: border-box;
  display: flex;
  align-items: center;
  background: #f0f0f0;
  border: 1px solid #909090;
  border-radius: 2px;
  z-index: 2;
}
.period-close {
  width: 14px;
  height: 100%;
  flex: none;
  background: linear-gradient(90deg, #e8e8e8, #c0c0c0);
  color: #666;
  font: 700 15px/20px "Liberation Sans", sans-serif;
  text-align: center;
}
.period-grip {
  width: 0;
  height: 24px;
  margin-left: 9px;
  border-left: 2px dotted #bbb;
  flex: none;
}
.period-list {
  display: flex;
  align-items: center;
  margin-left: 7px;
  font-family: "Liberation Sans", "Noto Sans CJK SC", sans-serif;
  font-size: 13px;
  color: #222;
}
.period {
  margin-right: 9px;
  white-space: nowrap;
}
.period.first {
  font-size: 14px;
}
.period.wide {
  margin-right: 7px;
  font-size: 14px;
}
.period-active {
  box-sizing: border-box;
  width: 49px;
  height: 26px;
  margin-left: -2px;
  line-height: 24px;
  font-size: 14px;
  text-align: center;
  background: #d8d8d8;
  border: 1px solid #c0c0c0;
}
.gear {
  margin-left: 7px;
}
</style>
